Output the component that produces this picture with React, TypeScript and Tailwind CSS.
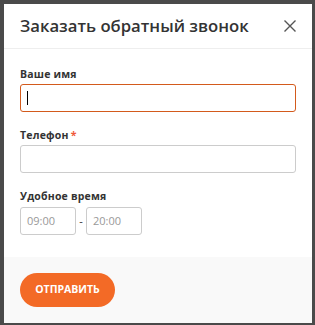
import React from "react";

export default function App() {
  const font = { fontFamily: '"Open Sans", "Noto Sans", sans-serif' };
  return (
    <div className="w-[315px] h-[325px] bg-[#4a4a4a] pt-[4px] pl-[4px] pr-[3px] pb-[2px]" style={font}>
      <div className="bg-white h-full flex flex-col">
        <div className="h-[45px] px-4 flex items-center justify-between border-b border-[#eeeeee]">
          <div className="text-[16.7px] font-semibold text-[#333333] leading-none">Заказать обратный звонок</div>
          <svg width="12" height="12" viewBox="0 0 12 12">
            <path d="M0.5 0.5 L11.5 11.5 M11.5 0.5 L0.5 11.5" stroke="#555555" strokeWidth="1.4" fill="none" />
          </svg>
        </div>
        <div className="px-4 pt-[17px] pb-[22px] flex flex-col">
          <div className="text-[10.5px] leading-[16px] font-bold text-[#333333] tracking-[0.2px] mb-[2px]">Ваше имя</div>
          <div className="h-[28px] border border-[#d35a1c] rounded-[3px] flex items-center pl-[6px]">
            <div className="w-[1px] h-[14px] bg-black" />
          </div>
          <div className="mt-[15px] text-[10.5px] leading-[16px] font-bold text-[#333333] tracking-[0.2px] mb-[2px]">
            Телефон<span className="ml-[2px] text-[#ef5a3a]">*</span>
          </div>
          <div className="h-[28px] border border-[#cccccc] rounded-[3px]" />
          <div className="mt-[15px] text-[10.5px] leading-[16px] font-bold text-[#333333] tracking-[0.2px] mb-[3px]">Удобное время</div>
          <div className="flex items-center">
            <div className="w-[56px] h-[28px] border border-[#cccccc] rounded-[3px] flex items-center pl-[6px] text-[11px] text-[#999999]">09:00</div>
            <div className="w-[10px] text-center text-[11px] text-[#333333]">-</div>
            <div className="w-[56px] h-[28px] border border-[#cccccc] rounded-[3px] flex items-center pl-[6px] text-[11px] text-[#999999]">20:00</div>
          </div>
        </div>
        <div className="flex-1 bg-[#f9f9f9] px-4 pt-[16px]">
          <div className="w-[95px] h-[34px] rounded-full bg-[#f36a26] flex items-center justify-center text-white text-[10.5px] font-bold">
            ОТПРАВИТЬ
          </div>
        </div>
      </div>
    </div>
  );
}
